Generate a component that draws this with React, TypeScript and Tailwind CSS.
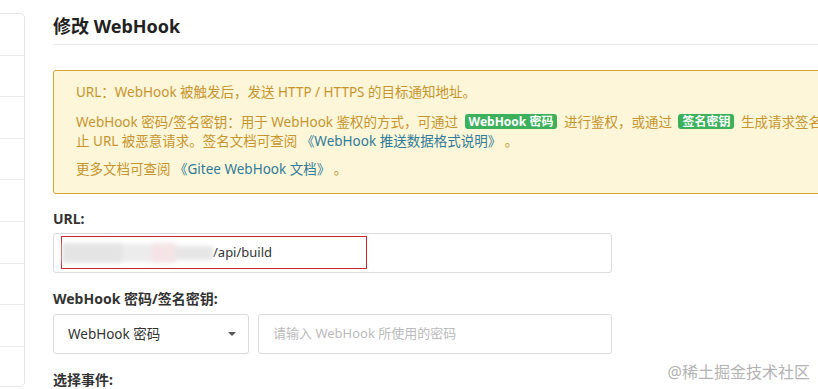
import React from 'react'

const font = { fontFamily: '"Noto Sans", "Noto Sans CJK SC", sans-serif' }

function Badge({ children }: { children: React.ReactNode }) {
    return <span className="mx-[3px] inline-block align-[1px] rounded-[3px] bg-[#3cb05b] px-[4px] text-[12px] leading-[15px] font-bold text-white">{children}</span>
}

function Sidebar() {
    // left menu card, only its right edge shows
    const rows = [0, 1, 2, 3, 4, 5, 6, 7, 8]
    return <div className="mt-[13px] h-[374px] w-[25px] shrink-0 rounded-r-[5px] border border-l-0 border-[#e6e6e6] bg-white overflow-hidden">
        {rows.map((r) => <div key={r} className="h-[41.6px] border-b border-[#ececec]" />)}
    </div>
}

export default function App() {
    return <div className="relative flex h-[389px] w-[818px] overflow-hidden bg-white text-[#333]" style={font}>
        <Sidebar />
        <div className="ml-[28px] w-[900px] shrink-0">
            <div className="border-b border-[#e8e8e8] pt-[14px] pb-[6px]">
                <h1 className="text-[18px] leading-[24px] font-bold text-[#222]">修改 WebHook</h1>
            </div>

            <div className="mt-[25px] h-[124px] rounded-[3px] border border-[#d8a62e] bg-[#fef6d8] pl-[22px] pt-[12px] text-[13.5px] leading-[19px] text-[#c6952f]">
                <p className="mb-[11px]">URL：WebHook 被触发后，发送 HTTP / HTTPS 的目标通知地址。</p>
                <p className="mb-[9px]">
                    WebHook 密码/签名密钥：用于 WebHook 鉴权的方式，可通过 <Badge>WebHook 密码</Badge> 进行鉴权，或通过 <Badge>签名密钥</Badge> 生成请求签名，防<br />
                    止 URL 被恶意请求。签名文档可查阅 <span className="text-[#2f7b99]">《WebHook 推送数据格式说明》</span> 。
                </p>
                <p>更多文档可查阅 <span className="text-[#2f7b99]">《Gitee WebHook 文档》</span> 。</p>
            </div>

            <div className="w-[559px]">
                <label className="mt-[15px] mb-[4px] block text-[14px] leading-[20px] font-bold">URL:</label>
                <div className="h-[40px] rounded-[3px] border border-[#dcdcdc] bg-white pl-[7px] pt-[2px]">
                    <div className="flex h-[33px] w-[306px] items-center border border-[#c8282d]">
                        <div className="flex h-[24px] w-[151px] items-center blur-[2px]">
                            <div className="h-[20px] w-[60px] bg-[#e4e4e4]" />
                            <div className="h-[18px] w-[30px] bg-[#ececec]" />
                            <div className="h-[20px] w-[24px] bg-[#f4e4e6]" />
                            <div className="h-[14px] w-[37px] bg-[#e6e6e6]" />
                        </div>
                        <span className="text-[13px] text-[#333]">/api/build</span>
                    </div>
                </div>

                <label className="mt-[16px] mb-[5px] block text-[14px] leading-[20px] font-bold">WebHook 密码/签名密钥:</label>
                <div className="flex gap-[9px]">
                    <div className="flex h-[40px] w-[196px] items-center justify-between rounded-[3px] border border-[#dcdcdc] pl-[14px] pr-[12px] text-[13.5px] text-[#333]">
                        <span>WebHook 密码</span>
                        <span className="h-0 w-0 border-x-[4px] border-t-[4px] border-x-transparent border-t-[#555]" />
                    </div>
                    <div className="flex h-[40px] flex-1 items-center rounded-[3px] border border-[#dcdcdc] pl-[14px] text-[13px] text-[#bbb]">
                        请输入 WebHook 所使用的密码
                    </div>
                </div>

                <label className="mt-[16px] block text-[14px] leading-[20px] font-bold">选择事件:</label>
            </div>
        </div>

        <div className="absolute right-[8px] bottom-[6px] text-[16px] leading-[22px] text-[#b3b3b3]">@稀土掘金技术社区</div>
    </div>
}
